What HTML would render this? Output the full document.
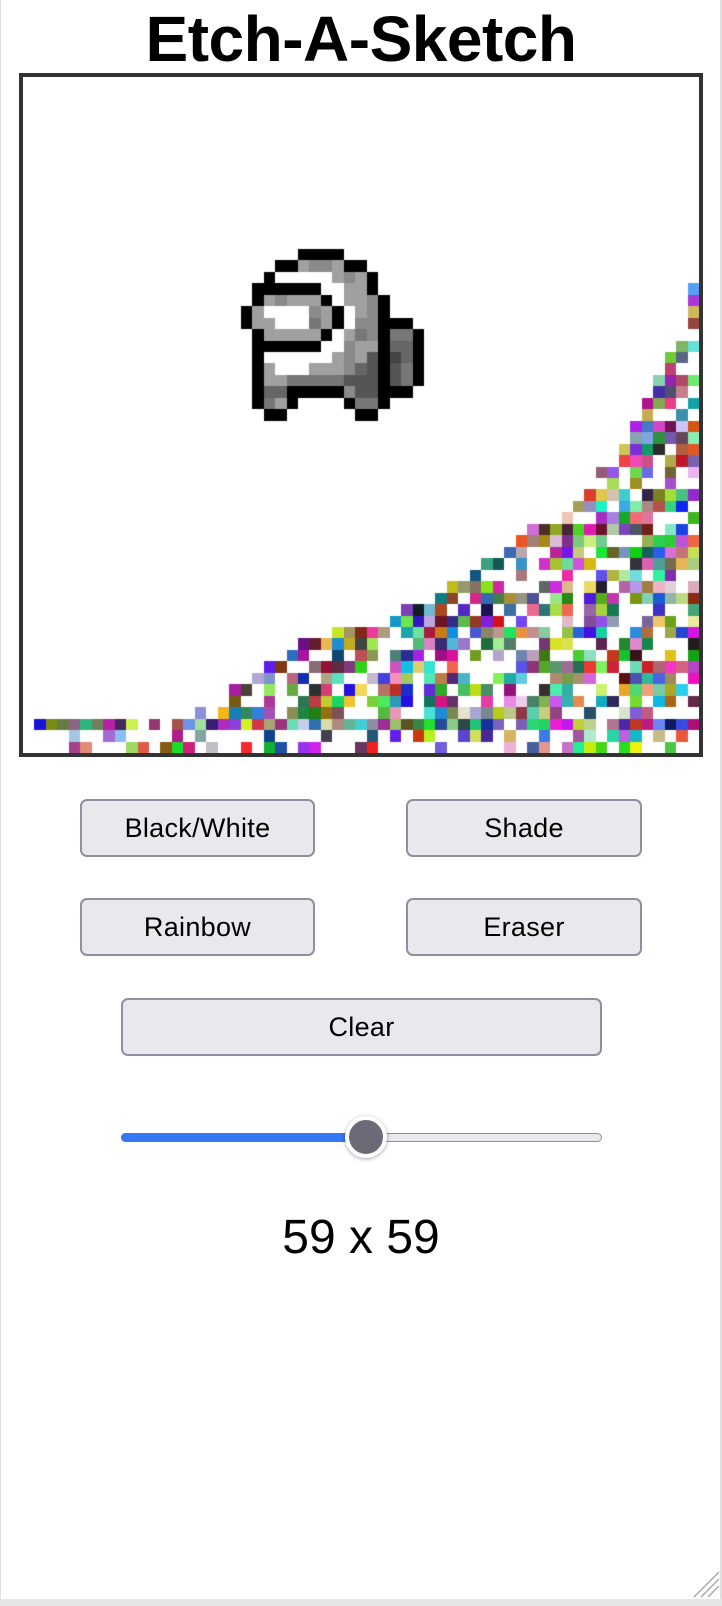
<!DOCTYPE html>
<html><head><meta charset="utf-8"><style>
html,body{margin:0;padding:0;background:#fff;}
body{width:722px;height:1606px;position:relative;overflow:hidden;font-family:"Liberation Sans",Arial,sans-serif;}
.edgeL{position:absolute;left:0;top:0;width:1px;height:1599px;background:#e0e0e0;}
.edgeR{position:absolute;left:720px;top:0;width:2px;height:1599px;background:#e0e0e0;}
.bot{position:absolute;left:0;top:1599px;width:722px;height:7px;background:#e6e6e6;}
h1{position:absolute;left:0;width:722px;top:0;margin:0;text-align:center;font-size:64px;line-height:64px;height:64px;font-weight:bold;letter-spacing:-0.5px;padding-top:0;}
.board{position:absolute;left:19px;top:73px;width:676px;height:676px;border:4px solid #333;background:#fff;}
canvas{position:absolute;left:0;top:0;}
.btn{position:absolute;box-sizing:border-box;background:#e9e9ed;border:2px solid #8f8f9d;border-radius:7px;font-size:27px;letter-spacing:0.3px;text-align:center;color:#000;}
.track{position:absolute;left:121px;top:1133px;width:481px;height:9px;border-radius:5px;background:#e9e9ed;border:1px solid #8f8f9d;box-sizing:border-box;}
.fill{position:absolute;left:121px;top:1133px;width:250px;height:9px;border-radius:5px;background:#3478f6;}
.thumb{position:absolute;left:345px;top:1116px;width:34px;height:34px;border-radius:50%;background:#6b6b78;border:4px solid #fff;box-shadow:0 1px 4px rgba(0,0,0,.35);}
.size{position:absolute;left:0;width:722px;top:1210px;text-align:center;font-size:48px;line-height:56px;}
.grip{position:absolute;left:690px;top:1568px;}
</style></head><body>
<div class="edgeL"></div><div class="edgeR"></div><div class="bot"></div>
<h1 style="top:7px">Etch-A-Sketch</h1>
<div class="board"><canvas id="c" width="676" height="676"></canvas></div>
<div class="btn" style="left:80px;top:799px;width:235px;height:58px;line-height:54px;">Black/White</div>
<div class="btn" style="left:406px;top:799px;width:236px;height:58px;line-height:54px;">Shade</div>
<div class="btn" style="left:80px;top:898px;width:235px;height:58px;line-height:54px;">Rainbow</div>
<div class="btn" style="left:406px;top:898px;width:236px;height:58px;line-height:54px;">Eraser</div>
<div class="btn" style="left:121px;top:998px;width:481px;height:58px;line-height:54px;">Clear</div>
<div class="track"></div><div class="fill"></div><div class="thumb"></div>
<div class="size">59 x 59</div>
<svg class="grip" width="30" height="30" viewBox="0 0 30 30"><g stroke="#aaa" stroke-width="1.5"><line x1="4" y1="29" x2="29" y2="4"/><line x1="11" y1="29" x2="29" y2="11"/><line x1="18" y1="29" x2="29" y2="18"/></g></svg>
<script>
(function(){
var cv=document.getElementById('c'),x=cv.getContext('2d'),N=59,s=676/59;
function cell(c,r,col){x.fillStyle=col;var a=Math.round(c*s),b=Math.round(r*s);x.fillRect(a,b,Math.round((c+1)*s)-a,Math.round((r+1)*s)-b);}
var seed=12345;function rnd(){seed=(seed*1103515245+12345)&0x7fffffff;return seed/0x7fffffff;}
var start={18:58,19:58,20:58,21:57,22:57,23:56,24:56,25:56,26:55,27:55,28:54,29:54,30:53,31:53,32:52,33:51,34:50,35:50,36:49,37:48,38:47,39:44,40:43,41:42,42:40,43:39,44:37,45:35,46:33,47:31,48:27,49:24,50:23,51:21,52:20,53:18,54:17,55:15,56:1,57:4,58:4};
for(var r=18;r<59;r++){var st=start[r];var p=r==56?0.92:(r>=57?0.5:0.72);
for(var c=st;c<59;c++){ if(rnd()<p){var col='rgb('+Math.floor(rnd()*230+15)+','+Math.floor(rnd()*230+15)+','+Math.floor(rnd()*230+15)+')';cell(c,r,col);} }}
var spr=[".....KKKK.......","...KKLMMLKK.....","..KWWWWWLMLK....",".KKKKKKWWLLK....",".KLMLLLKWLLMK...","KLWWWWMLKWLMK...","KLLWWWDLKWMMKKK.",".KLLLLLKWLDMKDDK",".KKKKKKWWMLLKGGK",".KWWWWWWLMLSKHGK",".KLWWWLLLMGSKSDK",".KLLDDDDDSSSKSDK",".KGGKKKKKMSSKKK.",".KDLKWWWWKDDK...","..KK......KK...."];
var pal={K:'#000',W:'#fff',L:'#a0a0a0',M:'#8a8a8a',D:'#777',G:'#666',S:'#555',H:'#444'};
for(var i=0;i<spr.length;i++)for(var j=0;j<16;j++){var ch=spr[i][j];if(ch!='.')cell(19+j,15+i,pal[ch]);}
})();
</script>
</body></html>
